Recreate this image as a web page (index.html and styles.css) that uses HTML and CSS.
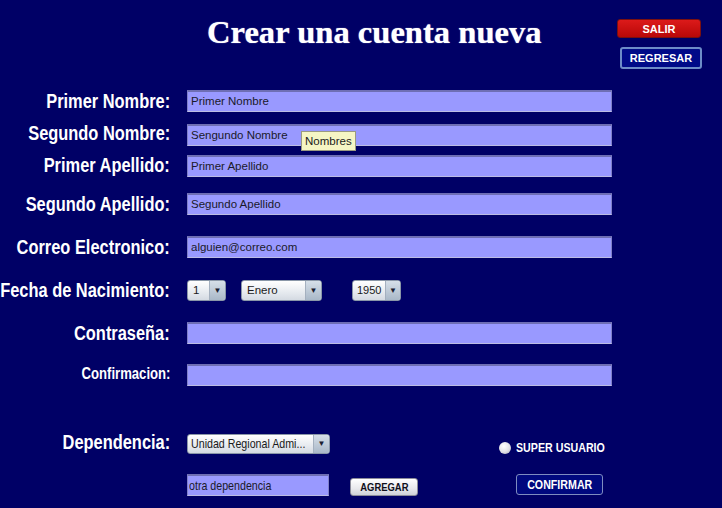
FILE: index.html
```html
<!DOCTYPE html>
<html lang="es">
<head>
<meta charset="utf-8">
<title>Crear una cuenta nueva</title>
<link rel="stylesheet" href="styles.css">
</head>
<body>
<div class="page">
  <header class="top">
    <h1 class="title">Crear una cuenta nueva</h1>
    <div class="actions">
      <button class="btn btn-red" type="button">SALIR</button>
      <button class="btn btn-navy" type="button">REGRESAR</button>
    </div>
  </header>

  <form class="form">
    <div class="row r1"><span class="lbl"><span class="cond">Primer Nombre:</span></span><div class="cell"><div class="field">Primer Nombre</div></div></div>
    <div class="row r2"><span class="lbl"><span class="cond">Segundo Nombre:</span></span><div class="cell tipwrap"><div class="field">Sengundo Nombre</div><div class="tooltip">Nombres</div></div></div>
    <div class="row r3"><span class="lbl"><span class="cond">Primer Apellido:</span></span><div class="cell"><div class="field">Primer Apellido</div></div></div>
    <div class="row r4"><span class="lbl"><span class="cond">Segundo Apellido:</span></span><div class="cell"><div class="field">Segundo Apellido</div></div></div>
    <div class="row r5"><span class="lbl"><span class="cond">Correo Electronico:</span></span><div class="cell"><div class="field">alguien@correo.com</div></div></div>
    <div class="row r6"><span class="lbl"><span class="cond">Fecha de Nacimiento:</span></span>
      <div class="cell dates">
        <div class="sel s-day"><span class="sel-text">1</span><span class="sel-arrow">&#9660;</span></div>
        <div class="sel s-month"><span class="sel-text">Enero</span><span class="sel-arrow">&#9660;</span></div>
        <div class="sel s-year"><span class="sel-text">1950</span><span class="sel-arrow">&#9660;</span></div>
      </div>
    </div>
    <div class="row r7"><span class="lbl"><span class="cond">Contraseña:</span></span><div class="cell"><div class="field"></div></div></div>
    <div class="row r8"><span class="lbl lbl-sm"><span class="cond">Confirmacion:</span></span><div class="cell"><div class="field"></div></div></div>
    <div class="row r9"><span class="lbl"><span class="cond">Dependencia:</span></span>
      <div class="cell dep">
        <div class="sel s-dep"><span class="sel-text"><span class="cond-l">Unidad Regional Admi...</span></span><span class="sel-arrow">&#9660;</span></div>
        <div class="radio"><span class="radio-dot"></span><span class="radio-text"><span class="cond-l">SUPER USUARIO</span></span></div>
      </div>
    </div>
    <div class="row r10"><span class="lbl"></span>
      <div class="cell dep">
        <div class="field field-sm"><span class="cond-l">otra dependencia</span></div>
        <button class="btn btn-light" type="button"><span class="cond-c">AGREGAR</span></button>
        <button class="btn btn-confirm" type="button"><span class="cond-c">CONFIRMAR</span></button>
      </div>
    </div>
  </form>
</div>
</body>
</html>
```
FILE: styles.css
```css
html, body {
  margin: 0;
  padding: 0;
  background: #000066;
}
body {
  width: 722px;
  height: 508px;
  overflow: hidden;
  font-family: "Liberation Sans", Arial, sans-serif;
}
.page {
  display: flex;
  flex-direction: column;
}

/* condensed text: Arial Narrow is Arial squeezed to 82% */
.cond, .cond-l, .cond-c {
  display: inline-block;
  white-space: nowrap;
  transform: scaleX(0.82);
}
.cond { transform-origin: right center; }
.cond-l { transform-origin: left center; }
.cond-c { transform-origin: center center; }

/* header */
.top {
  display: flex;
  height: 90px;
}
.title {
  margin: 0;
  padding: 14px 0 0 207px;
  font-family: "Liberation Serif", "Times New Roman", serif;
  font-weight: bold;
  font-size: 32.6px;
  line-height: 36px;
  color: #ffffff;
  text-shadow: 0 0 1px #c8c8e8;
}
.actions {
  margin-left: auto;
  padding: 19px 20px 0 0;
  display: flex;
  flex-direction: column;
  align-items: flex-end;
}
.btn {
  font-family: "Liberation Sans", Arial, sans-serif;
  font-weight: bold;
  font-size: 11px;
  padding: 0;
  cursor: pointer;
  border-radius: 3px;
}
.btn-red {
  width: 84px;
  height: 19px;
  margin-right: 1px;
  color: #ffffff;
  background: linear-gradient(#dc1a1a, #b80808);
  border: 1px solid #7a1010;
}
.btn-navy {
  width: 82px;
  height: 22px;
  margin-top: 9px;
  color: #ffffff;
  background: #000a88;
  border: 2px solid #6d8cc8;
}

/* form */
.form {
  display: flex;
  flex-direction: column;
}
.row {
  display: grid;
  grid-template-columns: 170px 1fr;
  column-gap: 17px;
  align-items: center;
  height: 22px;
}
.r2 { margin-top: 12px; }
.r3 { margin-top: 9px; }
.r4 { margin-top: 16px; }
.r5 { margin-top: 21px; }
.r6 { margin-top: 22px; height: 21px; }
.r7 { margin-top: 21px; }
.r8 { margin-top: 20px; }
.r9 { margin-top: 46px; height: 20px; }
.r10 { margin-top: 22px; }

.lbl {
  display: flex;
  justify-content: flex-end;
  white-space: nowrap;
  font-family: "Liberation Sans", Arial, sans-serif;
  font-weight: bold;
  font-size: 20px;
  line-height: 22px;
  color: #ffffff;
}
.r1 .lbl { margin-top: -1px; }
.r2 .lbl { margin-top: -5px; }
.r3 .lbl { margin-top: -3px; }
.r6 .lbl { margin-top: -1px; }
.r7 .lbl { margin-top: -1px; }
.r8 .lbl { margin-top: -3px; }
.r9 .lbl { margin-top: -3px; }
.lbl-sm { font-size: 16px; }

.cell {
  display: flex;
  align-items: center;
  height: 100%;
}
.field {
  box-sizing: border-box;
  width: 425px;
  height: 22px;
  background: #9999ff;
  border-top: 2px solid #6e6eb4;
  border-left: 1px solid #8080c8;
  border-right: 1px solid #8080c8;
  border-bottom: 1px solid #bcbce4;
  padding: 0 3px;
  font-size: 11.5px;
  line-height: 19px;
  color: #1a1a2a;
  white-space: nowrap;
}
.field-sm {
  width: 142px;
  padding-left: 1px;
  font-size: 13px;
}

.tipwrap { position: relative; }
.tooltip {
  position: absolute;
  left: 114px;
  top: 7px;
  box-sizing: border-box;
  height: 20px;
  padding: 0 3px;
  background: #f5f5c4;
  border: 1px solid #9a9a80;
  font-size: 11.5px;
  line-height: 18px;
  color: #1a1a1a;
}

/* selects */
.sel {
  box-sizing: border-box;
  display: flex;
  align-items: stretch;
  height: 21px;
  background: linear-gradient(#ffffff, #e6eaef 60%, #d4dae2);
  border: 1px solid #8a97a8;
  border-radius: 3px;
  overflow: hidden;
}
.sel-text {
  flex: 1;
  padding-left: 5px;
  font-size: 11.5px;
  line-height: 19px;
  color: #1a1a1a;
  white-space: nowrap;
  overflow: hidden;
}
.sel-arrow {
  width: 15px;
  border-left: 1px solid #a4b0bf;
  background: linear-gradient(#d6dfe8, #a9b8c8);
  font-size: 8px;
  line-height: 19px;
  text-align: center;
  color: #1a2030;
}
.s-day { width: 39px; }
.s-month { width: 81px; margin-left: 15px; }
.s-year { width: 49px; margin-left: 30px; }
.s-year .sel-text { padding-left: 4px; font-size: 11px; }
.s-year .sel-arrow { width: 14px; }
.s-dep { width: 143px; height: 20px; }
.s-dep .sel-text { padding-left: 3px; line-height: 18px; font-size: 13px; }
.s-dep .sel-arrow { line-height: 18px; }

/* radio */
.radio {
  display: flex;
  align-items: center;
  margin-left: 169px;
  margin-top: 8px;
}
.radio-dot {
  width: 12px;
  height: 12px;
  border-radius: 50%;
  background: radial-gradient(circle at 40% 35%, #ffffff, #e0e0e6 55%, #a8a8b4);
}
.radio-text {
  margin-left: 5px;
  font-weight: bold;
  font-size: 13px;
  color: #ffffff;
}

.btn-light {
  width: 68px;
  height: 18px;
  margin-left: 21px;
  margin-top: 3px;
  font-size: 11.5px;
  color: #10101a;
  background: linear-gradient(#ffffff, #e8e8ec 60%, #cfd2d8);
  border: 1px solid #8c8c9a;
}
.btn-confirm {
  width: 87px;
  height: 21px;
  margin-left: 98px;
  margin-top: -1px;
  font-size: 13px;
  color: #ffffff;
  background: #00087e;
  border: 1px solid #7e8cc0;
}
```
